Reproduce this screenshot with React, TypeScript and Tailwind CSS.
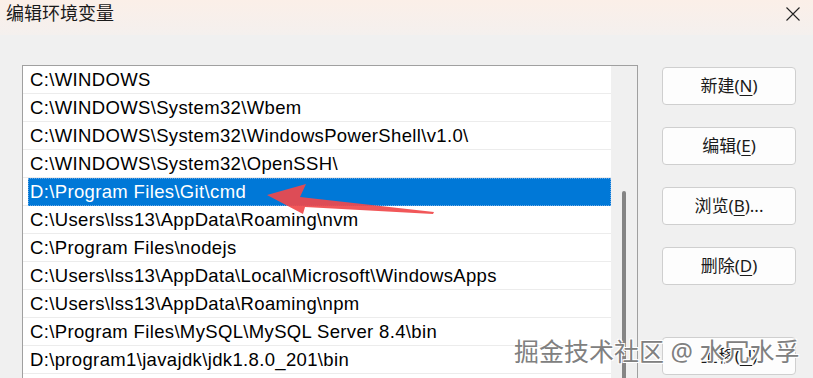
import React from "react";

const rows: string[] = [
  "C:\\WINDOWS",
  "C:\\WINDOWS\\System32\\Wbem",
  "C:\\WINDOWS\\System32\\WindowsPowerShell\\v1.0\\",
  "C:\\WINDOWS\\System32\\OpenSSH\\",
  "D:\\Program Files\\Git\\cmd",
  "C:\\Users\\lss13\\AppData\\Roaming\\nvm",
  "C:\\Program Files\\nodejs",
  "C:\\Users\\lss13\\AppData\\Local\\Microsoft\\WindowsApps",
  "C:\\Users\\lss13\\AppData\\Roaming\\npm",
  "C:\\Program Files\\MySQL\\MySQL Server 8.4\\bin",
  "D:\\program1\\javajdk\\jdk1.8.0_201\\bin",
  "",
];

const SEL = 4;

function Btn({ a, k, b }: { a: string; k: string; b?: string }) {
  return (
    <div className="h-[38px] w-[134px] rounded-[4px] border border-[#cfcfcf] bg-[#fdfdfd] flex items-center justify-center text-[17px] text-[#1a1a1a]">
      <span>
        {a}(<span className="underline underline-offset-[3px]">{k}</span>){b}
      </span>
    </div>
  );
}

export default function App() {
  return (
    <div
      className="relative w-[813px] h-[378px] overflow-hidden bg-[#f0f0f0]"
      style={{ fontFamily: '"Noto Sans", "Noto Sans CJK SC", sans-serif' }}
    >
      {/* title bar */}
      <div className="h-[35px] flex items-center justify-between pl-[6px] pr-[12px] bg-gradient-to-b from-[#fbefe8] to-[#f4f0ee]">
        <span className="text-[18px] text-[#1a1a1a] leading-none -mt-[10px]">编辑环境变量</span>
        <svg width="16" height="16" viewBox="0 0 16 16" className="-mt-[7px]">
          <path d="M1.5 1.5 L14.5 14.5 M14.5 1.5 L1.5 14.5" stroke="#222" strokeWidth="1.1" fill="none" />
        </svg>
      </div>

      {/* body */}
      <div className="flex pl-[22px] pt-[30px]">
        <div className="w-[616px] h-[320px] border border-[#a0a0a0] bg-white flex">
          <div
            className="w-[588px] flex flex-col tracking-[0.35px]"
            style={{ fontFamily: '"Liberation Sans", Arial, sans-serif' }}
          >
            {rows.map((r, i) => (
              <div key={i} className="h-[28px] shrink-0 border-b border-[#ececec] flex">
                {i === SEL ? (
                  <div className="ml-[5px] flex-1 -mb-px bg-[#0078d7] border border-dotted border-[#6aa8e6] flex items-center pl-[1px] text-white text-[18.5px] whitespace-nowrap">
                    {r}
                  </div>
                ) : (
                  <div className="ml-[7px] flex-1 flex items-center text-[18.5px] text-black whitespace-nowrap">
                    {r}
                  </div>
                )}
              </div>
            ))}
          </div>
          <div className="flex-1 bg-[#f0f0f0] flex justify-center pt-[125px]">
            <div className="w-[4px] h-[300px] rounded-t-full bg-[#858585]" />
          </div>
        </div>

        <div className="ml-[24px] mt-[2px] flex flex-col">
          <Btn a="新建" k="N" />
          <div className="h-[22px]" />
          <Btn a="编辑" k="E" />
          <div className="h-[22px]" />
          <Btn a="浏览" k="B" b="..." />
          <div className="h-[22px]" />
          <Btn a="删除" k="D" />
          <div className="h-[52px]" />
          <Btn a="上移" k="U" />
        </div>
      </div>

      {/* red annotation arrow */}
      <svg className="absolute left-0 top-0 pointer-events-none" width="813" height="378" viewBox="0 0 813 378">
        <polygon
          points="267,195 306,184 300,197 434,212 433,214 305,207 303,214"
          fill="#f0494b"
          fillOpacity="0.92"
        />
      </svg>

      {/* watermark */}
      <div className="absolute left-[514px] top-[339px] text-[25px] leading-none text-[#808080] whitespace-nowrap [text-shadow:1px_1px_0_#ffffff,-1px_-1px_0_#ffffff,1px_-1px_0_#ffffff,-1px_1px_0_#ffffff]">
        掘金技术社区 @ 水冗水孚
      </div>
    </div>
  );
}
